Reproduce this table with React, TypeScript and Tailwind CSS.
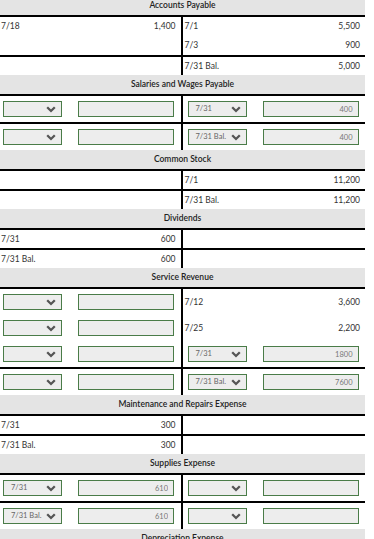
import React from "react";

type Cell =
  | { kind: "text"; date: string; amt: string }
  | { kind: "pick"; date?: string; amt?: string }
  | null;

type Row = { left: Cell; right: Cell; line?: boolean; tall?: boolean };

type Account = { title: string; rows: Row[] };

const txt = (date: string, amt: string): Cell => ({ kind: "text", date, amt });
const pick = (date?: string, amt?: string): Cell => ({ kind: "pick", date, amt });

const accounts: Account[] = [
  {
    title: "Accounts Payable",
    rows: [
      { left: txt("7/18", "1,400"), right: txt("7/1", "5,500"), tall: true },
      { left: null, right: txt("7/3", "900"), tall: true },
      { left: null, right: txt("7/31 Bal.", "5,000"), line: true },
    ],
  },
  {
    title: "Salaries and Wages Payable",
    rows: [
      { left: pick(), right: pick("7/31", "400") },
      { left: pick(), right: pick("7/31 Bal.", "400"), line: true },
    ],
  },
  {
    title: "Common Stock",
    rows: [
      { left: null, right: txt("7/1", "11,200") },
      { left: null, right: txt("7/31 Bal.", "11,200"), line: true },
    ],
  },
  {
    title: "Dividends",
    rows: [
      { left: txt("7/31", "600"), right: null },
      { left: txt("7/31 Bal.", "600"), right: null, line: true },
    ],
  },
  {
    title: "Service Revenue",
    rows: [
      { left: pick(), right: txt("7/12", "3,600") },
      { left: pick(), right: txt("7/25", "2,200") },
      { left: pick(), right: pick("7/31", "1800") },
      { left: pick(), right: pick("7/31 Bal.", "7600"), line: true },
    ],
  },
  {
    title: "Maintenance and Repairs Expense",
    rows: [
      { left: txt("7/31", "300"), right: null },
      { left: txt("7/31 Bal.", "300"), right: null, line: true },
    ],
  },
  {
    title: "Supplies Expense",
    rows: [
      { left: pick("7/31", "610"), right: pick() },
      { left: pick("7/31 Bal.", "610"), right: pick(), line: true },
    ],
  },
  {
    title: "Depreciation Expense",
    rows: [
      { left: pick(), right: pick() },
      { left: pick(), right: pick(), line: true },
    ],
  },
];

function Chevron() {
  return (
    <svg width="10" height="7" viewBox="0 0 10 7" className="shrink-0">
      <path d="M1.2 1.3 L5 5 L8.8 1.3" fill="none" stroke="#555" strokeWidth="2.3" />
    </svg>
  );
}

function EntryCell({ cell, side }: { cell: Cell; side: "l" | "r" }) {
  const edge = side === "l" ? "border-r-2 border-black" : "";
  if (!cell) return <div className={`h-full ${edge}`} />;

  if (cell.kind === "text") {
    return (
      <div
        className={`h-full flex items-center justify-between pr-[5px] ${
          side === "l" ? "pl-[1px]" : "pl-[2px]"
        } ${edge}`}
      >
        <span>{cell.date}</span>
        <span>{cell.amt}</span>
      </div>
    );
  }

  return (
    <div
      className={`h-full flex items-center ${side === "l" ? "pl-[3px]" : "pl-[5px]"} ${edge}`}
    >
      {/* dropdown for the date */}
      <div className="w-[59px] h-[16px] border border-[#4a7c48] bg-[#ededed] flex items-center justify-between pl-[7px] pr-[5px] text-[7.5px] text-[#666]">
        <span>{cell.date ?? ""}</span>
        <Chevron />
      </div>
      <input
        readOnly
        value={cell.amt ?? ""}
        className="ml-[16px] w-[96px] h-[16px] border border-[#4a7c48] bg-[#ededed] text-right pr-[5px] text-[7.5px] text-[#777] outline-none"
      />
    </div>
  );
}

function TAccount({ acct }: { acct: Account }) {
  return (
    <div>
      <div className="h-[21px] bg-[#e4e4e4] border-b-2 border-black flex items-center justify-center font-semibold text-[#222]">
        {acct.title}
      </div>
      {acct.rows.map((row, i) => {
        const hasPick = row.left?.kind === "pick" || row.right?.kind === "pick";
        const h = hasPick ? "h-[26px]" : row.tall ? "h-[19px]" : "h-[18px]";
        return (
          <div
            key={i}
            className={`grid grid-cols-2 ${row.line ? "border-t-2 border-black" : ""}`}
          >
            <div className={h}>
              <EntryCell cell={row.left} side="l" />
            </div>
            <div className={h}>
              <EntryCell cell={row.right} side="r" />
            </div>
          </div>
        );
      })}
    </div>
  );
}

export default function App() {
  return (
    <div className="min-h-screen bg-white overflow-hidden">
      <div className="w-[365px] -mt-[4px] text-[8.5px] text-[#333] font-['Lato',sans-serif]">
        {accounts.map((a) => (
          <TAccount key={a.title} acct={a} />
        ))}
      </div>
    </div>
  );
}
